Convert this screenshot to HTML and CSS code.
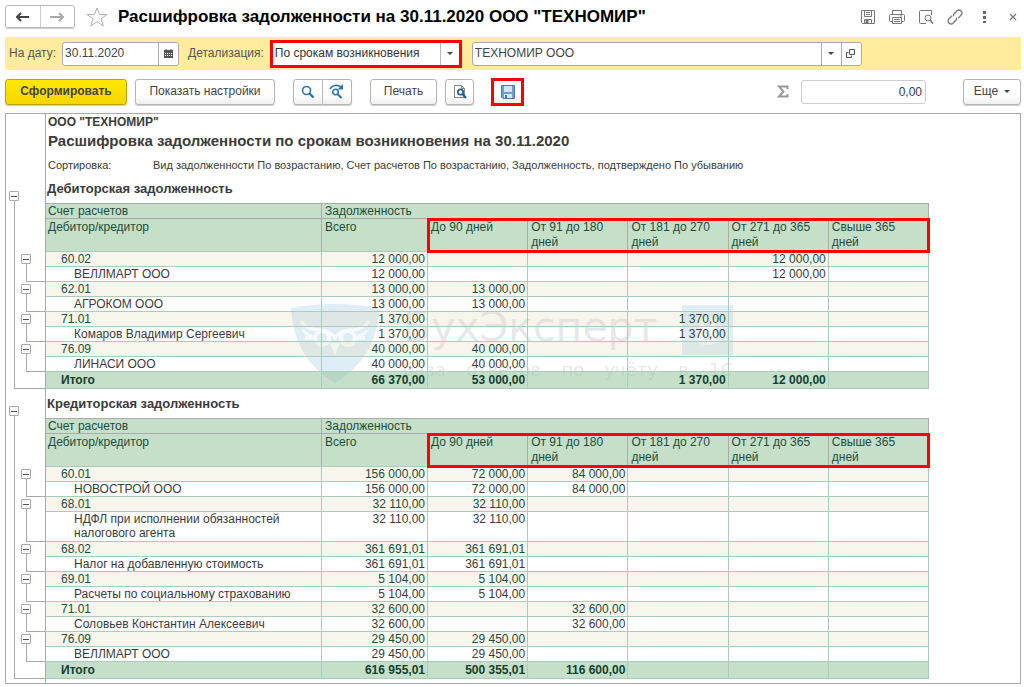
FILE: index.html
```html
<!DOCTYPE html>
<html lang="ru">
<head>
<meta charset="utf-8">
<title>Расшифровка задолженности</title>
<link rel="stylesheet" href="styles.css">
</head>
<body>
<header class="titlebar">
  <div class="nav">
    <button type="button" aria-label="Назад"><svg width="14" height="10" viewBox="0 0 14 10"><path d="M1 5h12M5 1L1 5l4 4" fill="none" stroke="#444" stroke-width="2"/></svg></button>
    <button type="button" aria-label="Вперед"><svg width="14" height="10" viewBox="0 0 14 10"><path d="M0 5h12M9 1l4 4-4 4" fill="none" stroke="#aaa" stroke-width="2"/></svg></button>
  </div>
  <button type="button" class="bare" aria-label="В избранное"><svg width="22" height="20" viewBox="0 0 22 20"><path d="M11 1l2.600 6.500H21l-6 4.400 2.300 7.100L11 14.700 4.700 19 7 11.900 1 7.500h7.400z" fill="#fff" stroke="#aab0b6"/></svg></button>
  <h1>Расшифровка задолженности на 30.11.2020 ООО "ТЕХНОМИР"</h1>
  <div class="window-tools">
    <button type="button" class="bare" aria-label="Сохранить"><svg width="16" height="16" viewBox="0 0 16 16" fill="none" stroke="#777"><path d="M1.500 1.500h13v13h-12l-1-1zM4.500 1.500v6h7v-6M6 3.500h4M6 5.500h4M4.500 14.500v-4h7v4"/><path d="M6 11h2v3H6z" fill="#777"/></svg></button>
    <button type="button" class="bare" aria-label="Печать"><svg width="16" height="16" viewBox="0 0 16 16" fill="none" stroke="#777"><path d="M3.500 5V1.500h9V5M3.500 12.500h-2a1 1 0 0 1-1-1v-5a1 1 0 0 1 1-1h13a1 1 0 0 1 1 1v5a1 1 0 0 1-1 1h-2M3.500 8.500h9v6h-9zM5 10.500h6M5 12.500h6M11 7h2"/></svg></button>
    <button type="button" class="bare" aria-label="Просмотр"><svg width="16" height="16" viewBox="0 0 16 16" fill="none" stroke="#777"><path d="M8 14.500H2.500a1 1 0 0 1-1-1v-11a1 1 0 0 1 1-1h11V6"/><circle cx="10" cy="9" r="3"/><path d="M12 11l3 3.500" stroke-width="1.600"/></svg></button>
    <button type="button" class="bare" aria-label="Ссылка"><svg width="16" height="16" viewBox="0 0 16 16" fill="none" stroke="#777" stroke-width="1.300"><g transform="rotate(-45 8 8)"><path d="M7 5H2.500a3 3 0 0 0 0 6H7l1.500-1.500M9 11h4.500a3 3 0 0 0 0-6H9L7.500 6.500"/></g></svg></button>
    <button type="button" class="bare" aria-label="Меню"><svg width="16" height="16" viewBox="0 0 16 16" fill="#666"><path d="M7 2h3v3H7zM7 7h3v3H7zM7 12h3v2H7z"/></svg></button>
    <button type="button" class="bare" aria-label="Закрыть"><svg width="16" height="16" viewBox="0 0 16 16"><path d="M5 5l6 6M11 5l-6 6" stroke="#777" stroke-width="1.300"/></svg></button>
  </div>
</header>

<div class="filters">
  <label for="date">На дату:</label>
  <div class="field date">
    <input id="date" type="text" value="30.11.2020">
    <button type="button" aria-label="Календарь"><svg width="9" height="9" viewBox="0 0 9 9"><path d="M0 1h9v8H0z" fill="#555"/><path d="M2 0v2M7 0v2" stroke="#555"/><path d="M1 4.500h7M1 6.500h7" stroke="#fff" stroke-dasharray="1 1"/></svg></button>
  </div>
  <label for="detail">Детализация:</label>
  <div class="select-wrap marked">
    <select id="detail"><option>По срокам возникновения</option></select>
    <span class="drop"></span>
  </div>
  <div class="field company">
    <input type="text" value="ТЕХНОМИР ООО" aria-label="Организация">
    <button type="button" aria-label="Выбрать"><span class="caret"></span></button>
    <button type="button" aria-label="Открыть"><svg width="10" height="10" viewBox="0 0 10 10" fill="none" stroke="#555"><path d="M3.500 .5h5v5h-5zM2.500 3.500h-2v5h5v-2"/></svg></button>
  </div>
</div>

<div class="toolbar">
  <button type="button" class="btn primary">Сформировать</button>
  <button type="button" class="btn settings">Показать настройки</button>
  <div class="pair">
    <button type="button" class="btn" aria-label="Найти"><svg width="14" height="14" viewBox="0 0 14 14" fill="none" stroke="#2d74ad"><circle cx="5.500" cy="5.500" r="4" stroke-width="1.600"/><path d="M8.500 8.500l4 4" stroke-width="2.400"/></svg></button>
    <button type="button" class="btn" aria-label="Найти далее"><svg width="16" height="15" viewBox="0 0 16 15" fill="none" stroke="#2d74ad"><circle cx="6.500" cy="8" r="2.700" stroke-width="1.500"/><path d="M8.500 10l4 4" stroke-width="2.200"/><path d="M1 5C3 1.500 8 0 12 3" stroke-width="1.600"/><path d="M14 0v5.500H8.500z" fill="#2d74ad" stroke="none"/></svg></button>
  </div>
  <button type="button" class="btn print">Печать</button>
  <button type="button" class="btn square" aria-label="Предварительный просмотр"><svg width="14" height="15" viewBox="0 0 14 15" fill="none"><path d="M1.500 13.500V1.500h7l3 3v9z" stroke="#888"/><path d="M8.500 1.500v3h3" stroke="#888"/><circle cx="7.500" cy="8" r="2.700" stroke="#1f5f96" stroke-width="1.700" fill="#fff"/><path d="M9.500 10l3.500 4" stroke="#1f5f96" stroke-width="2.200"/></svg></button>
  <button type="button" class="btn square marked save" aria-label="Сохранить отчет"><svg width="14" height="14" viewBox="0 0 14 14"><path d="M.5 .5h13v13H2l-1.500-1.500z" fill="#6f9fca" stroke="#4b7aa6"/><path d="M3 1h8v6H3z" fill="#d5e3ef"/><path d="M3 9h8v4H3z" fill="#dce7f0"/><path d="M4 10h2v3H4z" fill="#4b7aa6"/></svg></button>
  <label class="sigma" for="sum"><svg width="12" height="13" viewBox="0 0 12 13" fill="none" stroke="#999" role="img" aria-label="Сумма"><path d="M10.500 4V1.500H2l4.500 5-4.500 5h8.500V9" stroke-width="2"/></svg></label>
  <input id="sum" class="sum" type="text" value="0,00" readonly>
  <button type="button" class="btn more">Еще <span class="caret"></span></button>
</div>

<main class="report">
  <div class="watermark">
    <svg width="88" height="80" viewBox="0 0 88 80"><path d="M0 4Q44-4 88 4Q86 54 44 79Q2 54 0 4z" fill="#7fb9e0" opacity=".25"/><g fill="none" stroke="#fff" opacity=".8"><circle cx="31" cy="34" r="7" stroke-width="4"/><circle cx="57" cy="34" r="7" stroke-width="4"/><path d="M10 17q5 9 20 9q10 1 14 8q4-7 14-8q15 0 20-9M12 26q3 5 9 6M14 34h8M76 26q-3 5-9 6M74 34h-8" stroke-width="3"/></g><path d="M39 39h10l-5 13z" fill="#fff" opacity=".9"/></svg>
    <div class="wm-text"><span class="wm-name">БухЭксперт</span><span class="wm-tag">база ответов по учёту в 1С</span></div>
    <div class="wm-badge">8</div>
  </div>

  <div class="report-head">
    <p class="org">ООО "ТЕХНОМИР"</p>
    <h2>Расшифровка задолженности по срокам возникновения на 30.11.2020</h2>
    <p class="sort"><span>Сортировка:</span><span>Вид задолженности По возрастанию, Счет расчетов По возрастанию, Задолженность, подтверждено По убыванию</span></p>
  </div>

  <section class="block">
    <div class="outline"><button type="button" class="fold" aria-label="Свернуть раздел"></button><i></i></div>
    <div class="content">
      <h3>Дебиторская задолженность</h3>
      <table>
        <colgroup><col class="c-tree"><col class="c-name"><col class="c-total"><col><col><col><col><col></colgroup>
        <thead>
          <tr><td class="tree"></td><th>Счет расчетов</th><th colspan="6">Задолженность</th></tr>
          <tr class="ages"><td class="tree"></td><th>Дебитор/кредитор</th><th>Всего</th><th>До 90 дней</th><th>От 91 до 180 дней</th><th>От 181 до 270 дней</th><th>От 271 до 365 дней</th><th>Свыше 365 дней</th></tr>
        </thead>
        <tbody>
          <tr class="acc"><td class="tree" rowspan="2"><div><button type="button" class="fold" aria-label="Свернуть 60.02"></button><i></i></div></td><td>60.02</td><td>12 000,00</td><td></td><td></td><td></td><td>12 000,00</td><td></td></tr>
          <tr><td>ВЕЛЛМАРТ ООО</td><td>12 000,00</td><td></td><td></td><td></td><td>12 000,00</td><td></td></tr>
        </tbody>
        <tbody>
          <tr class="acc"><td class="tree" rowspan="2"><div><button type="button" class="fold" aria-label="Свернуть 62.01"></button><i></i></div></td><td>62.01</td><td>13 000,00</td><td>13 000,00</td><td></td><td></td><td></td><td></td></tr>
          <tr><td>АГРОКОМ ООО</td><td>13 000,00</td><td>13 000,00</td><td></td><td></td><td></td><td></td></tr>
        </tbody>
        <tbody>
          <tr class="acc"><td class="tree" rowspan="2"><div><button type="button" class="fold" aria-label="Свернуть 71.01"></button><i></i></div></td><td>71.01</td><td>1 370,00</td><td></td><td></td><td>1 370,00</td><td></td><td></td></tr>
          <tr><td>Комаров Владимир Сергеевич</td><td>1 370,00</td><td></td><td></td><td>1 370,00</td><td></td><td></td></tr>
        </tbody>
        <tbody>
          <tr class="acc"><td class="tree" rowspan="2"><div><button type="button" class="fold" aria-label="Свернуть 76.09"></button><i></i></div></td><td>76.09</td><td>40 000,00</td><td>40 000,00</td><td></td><td></td><td></td><td></td></tr>
          <tr><td>ЛИНАСИ ООО</td><td>40 000,00</td><td>40 000,00</td><td></td><td></td><td></td><td></td></tr>
        </tbody>
        <tfoot>
          <tr><td class="tree"></td><td>Итого</td><td>66 370,00</td><td>53 000,00</td><td></td><td>1 370,00</td><td>12 000,00</td><td></td></tr>
        </tfoot>
      </table>
      <div class="age-mark"></div>
    </div>
  </section>

  <section class="block second">
    <div class="outline"><button type="button" class="fold" aria-label="Свернуть раздел"></button><i></i></div>
    <div class="content">
      <h3>Кредиторская задолженность</h3>
      <table>
        <colgroup><col class="c-tree"><col class="c-name"><col class="c-total"><col><col><col><col><col></colgroup>
        <thead>
          <tr><td class="tree"></td><th>Счет расчетов</th><th colspan="6">Задолженность</th></tr>
          <tr class="ages"><td class="tree"></td><th>Дебитор/кредитор</th><th>Всего</th><th>До 90 дней</th><th>От 91 до 180 дней</th><th>От 181 до 270 дней</th><th>От 271 до 365 дней</th><th>Свыше 365 дней</th></tr>
        </thead>
        <tbody>
          <tr class="acc"><td class="tree" rowspan="2"><div><button type="button" class="fold" aria-label="Свернуть 60.01"></button><i></i></div></td><td>60.01</td><td>156 000,00</td><td>72 000,00</td><td>84 000,00</td><td></td><td></td><td></td></tr>
          <tr><td>НОВОСТРОЙ ООО</td><td>156 000,00</td><td>72 000,00</td><td>84 000,00</td><td></td><td></td><td></td></tr>
        </tbody>
        <tbody>
          <tr class="acc"><td class="tree" rowspan="2"><div class="tall"><button type="button" class="fold" aria-label="Свернуть 68.01"></button><i></i></div></td><td>68.01</td><td>32 110,00</td><td>32 110,00</td><td></td><td></td><td></td><td></td></tr>
          <tr class="wrap"><td>НДФЛ при исполнении обязанностей налогового агента</td><td>32 110,00</td><td>32 110,00</td><td></td><td></td><td></td><td></td></tr>
        </tbody>
        <tbody>
          <tr class="acc"><td class="tree" rowspan="2"><div><button type="button" class="fold" aria-label="Свернуть 68.02"></button><i></i></div></td><td>68.02</td><td>361 691,01</td><td>361 691,01</td><td></td><td></td><td></td><td></td></tr>
          <tr><td>Налог на добавленную стоимость</td><td>361 691,01</td><td>361 691,01</td><td></td><td></td><td></td><td></td></tr>
        </tbody>
        <tbody>
          <tr class="acc"><td class="tree" rowspan="2"><div><button type="button" class="fold" aria-label="Свернуть 69.01"></button><i></i></div></td><td>69.01</td><td>5 104,00</td><td>5 104,00</td><td></td><td></td><td></td><td></td></tr>
          <tr><td>Расчеты по социальному страхованию</td><td>5 104,00</td><td>5 104,00</td><td></td><td></td><td></td><td></td></tr>
        </tbody>
        <tbody>
          <tr class="acc"><td class="tree" rowspan="2"><div><button type="button" class="fold" aria-label="Свернуть 71.01"></button><i></i></div></td><td>71.01</td><td>32 600,00</td><td></td><td>32 600,00</td><td></td><td></td><td></td></tr>
          <tr><td>Соловьев Константин Алексеевич</td><td>32 600,00</td><td></td><td>32 600,00</td><td></td><td></td><td></td></tr>
        </tbody>
        <tbody>
          <tr class="acc"><td class="tree" rowspan="2"><div><button type="button" class="fold" aria-label="Свернуть 76.09"></button><i></i></div></td><td>76.09</td><td>29 450,00</td><td>29 450,00</td><td></td><td></td><td></td><td></td></tr>
          <tr><td>ВЕЛЛМАРТ ООО</td><td>29 450,00</td><td>29 450,00</td><td></td><td></td><td></td><td></td></tr>
        </tbody>
        <tfoot>
          <tr><td class="tree"></td><td>Итого</td><td>616 955,01</td><td>500 355,01</td><td>116 600,00</td><td></td><td></td><td></td></tr>
        </tfoot>
      </table>
      <div class="age-mark"></div>
    </div>
  </section>
</main>
</body>
</html>
```
FILE: styles.css
```css
* { box-sizing: border-box; }
body {
  margin: 0;
  padding: 0 3px 2px 5px;
  background: #fff;
  color: #3b3b3b;
  font: 12px/15px "Liberation Sans", Arial, sans-serif;
}
h1, h2, h3, p { margin: 0; }
button, input, select { font: inherit; color: inherit; margin: 0; }
button { display: flex; align-items: center; justify-content: center; padding: 0; }
.bare { border: 0; background: none; }

.titlebar { display: flex; align-items: center; height: 33px; }
.titlebar h1 { margin-left: 10px; font-size: 17px; line-height: 20px; color: #000; white-space: nowrap; }
.nav { display: flex; width: 70px; height: 23px; margin-right: 11px; border: 1px solid #b9b9b9; border-radius: 3px; box-shadow: 0 1px 1px #ccc; }
.nav button { flex: 1; border: 0; background: none; }
.nav button + button { border-left: 1px solid #ccc; }
.window-tools { display: flex; gap: 13px; margin-left: auto; }

.filters { display: flex; align-items: center; height: 33px; margin-top: 4px; padding-left: 4px; background: #ffec9c; color: #555; }
.filters label { white-space: nowrap; margin-right: 6px; }
.field { display: flex; height: 24px; border: 1px solid #a9a9a9; border-radius: 3px; background: #fff; overflow: hidden; }
.field input { flex: 1; min-width: 0; border: 0; padding: 0 2px; background: none; color: #444; }
.field button { width: 20px; border: 0; border-left: 1px solid #a9a9a9; background: #fff; }
.date { width: 117px; margin-right: 9px; }
.company { width: 390px; margin-left: 10px; }
.caret { width: 0; height: 0; border: 3px solid transparent; border-top: 3px solid #444; border-bottom: 0; }
.marked { border: 3px solid #ff0000; }
.select-wrap { display: grid; width: 192px; height: 28px; background: #fff; }
.select-wrap > * { grid-area: 1 / 1; }
.select-wrap select { appearance: none; border: 0; padding: 0 2px; background: none; width: 100%; color: #333; }
.drop { justify-self: end; display: grid; place-items: center; width: 19px; border-left: 1px solid #bbb; pointer-events: none; }
.drop::before { content: ""; border: 3px solid transparent; border-top-color: #444; border-bottom: 0; }

.toolbar { display: flex; align-items: center; height: 43px; }
.btn { height: 26px; border: 1px solid #b5b5b5; border-radius: 3px; background: linear-gradient(#fff 60%, #efefef); box-shadow: 0 1px 1px #ccc; color: #444; white-space: nowrap; }
.primary { width: 122px; background: linear-gradient(#ffe900, #f6d500); border-color: #bda400; font-weight: bold; }
.settings { width: 140px; margin-left: 8px; }
.pair { display: flex; margin-left: 18px; }
.pair .btn { width: 30px; border-radius: 3px 0 0 3px; }
.pair .btn + .btn { border-left: 0; width: 29px; border-radius: 0 3px 3px 0; }
.print { width: 67px; margin-left: 18px; }
.square { width: 29px; margin-left: 8px; }
.save { width: 33px; height: 28px; margin-left: 17px; border: 3px solid #ff0000; border-radius: 0; box-shadow: none; }
.sigma { display: flex; margin-left: auto; }
.sum { width: 125px; height: 24px; margin-left: 12px; padding: 0 3px; border: 1px solid #ccc; border-radius: 3px; text-align: right; }
.more { width: 58px; margin-left: 37px; gap: 6px; }

.report { position: relative; border: 1px solid #aaa; padding-bottom: 4px; }
.report::before { content: ""; position: absolute; left: 39px; top: 0; bottom: 0; width: 1px; background: #aaa; }
.report-head { padding-left: 42px; }
.org { font-weight: bold; line-height: 16px; }
.report h2 { margin-top: 2px; font-size: 15px; line-height: 18px; }
.sort { display: flex; padding-top: 8px; font-size: 11px; }
.sort span:first-child { width: 105px; }

.block { display: grid; margin-top: 8px; }
.block.second { margin-top: 7px; }
.outline, .content { grid-area: 1 / 1; }
.outline { display: flex; flex-direction: column; width: 40px; padding: 10px 0 0 3px; }
.outline i, .tree i { flex: 1; margin-left: 5px; border-left: 1px solid #aaa; border-bottom: 1px solid #aaa; }
.fold { flex: none; width: 10px; height: 10px; border: 1px solid #aaa; border-radius: 1px; background: #fff; }
.fold::before { content: ""; width: 6px; height: 1px; background: #555; }
.content { position: relative; margin-left: 15px; }
.content h3 { padding-left: 26px; font-size: 13px; line-height: 15px; padding-bottom: 7px; }

table { width: 908px; table-layout: fixed; border-collapse: separate; border-spacing: 0; line-height: 14px; }
.c-tree { width: 25px; }
.c-name { width: 276px; }
.c-total { width: 106px; }
th, td { height: 15px; padding: 0 2px; border: 0 solid #a9cdbd; border-width: 0 1px 1px 0; text-align: right; vertical-align: top; }
th { height: 16px; background: #c6dfc8; color: #1b4d3e; font-weight: normal; text-align: left; border-color: #a9aca9; }
tr:first-child th { border-top-width: 1px; }
tr:first-child th:nth-child(3) { padding-left: 3px; }
.ages th { height: 33px; padding: 1px 12px 0 3px; line-height: 15px; border-bottom-color: #a9cdbd; }
.ages th:nth-child(2) { padding-left: 2px; }
tbody tr:not(.acc) td:first-child { padding: 0 24px 0 28px; text-align: left; }
.acc { color: #1b4d3e; }
.acc td:not(.tree) { background: rgba(224, 217, 180, .25); }
.acc td:nth-child(2), tfoot td:nth-child(2) { padding-left: 15px; text-align: left; }
.wrap td { height: 30px; }
tfoot { color: #123f32; font-weight: bold; }
tfoot td { height: 17px; line-height: 16px; }
tfoot td:not(.tree) { background: rgba(150, 197, 155, .55); }
td.tree { padding: 0; border: 0; }
.tree div { display: flex; flex-direction: column; height: 30px; padding-top: 2px; }
.tree .tall { height: 45px; }
.age-mark { position: absolute; left: 406px; top: 37px; width: 503px; height: 35px; border: 3px solid #ff0000; pointer-events: none; }

.watermark { position: absolute; left: 285px; top: 190px; display: flex; pointer-events: none; }
.wm-text { width: 330px; margin-left: 24px; color: rgba(110, 100, 130, .17); font-family: "DejaVu Sans", sans-serif; }
.wm-name { display: block; font-size: 41px; line-height: 46px; }
.wm-tag { display: block; margin-top: 8px; font-size: 18px; line-height: 24px; text-align-last: justify; }
.wm-badge { position: absolute; left: 391px; top: 1px; width: 51px; height: 50px; background: rgba(127, 185, 224, .25); color: rgba(255, 255, 255, .7); font: bold 40px/50px "Noto Sans", sans-serif; text-align: center; }
```
